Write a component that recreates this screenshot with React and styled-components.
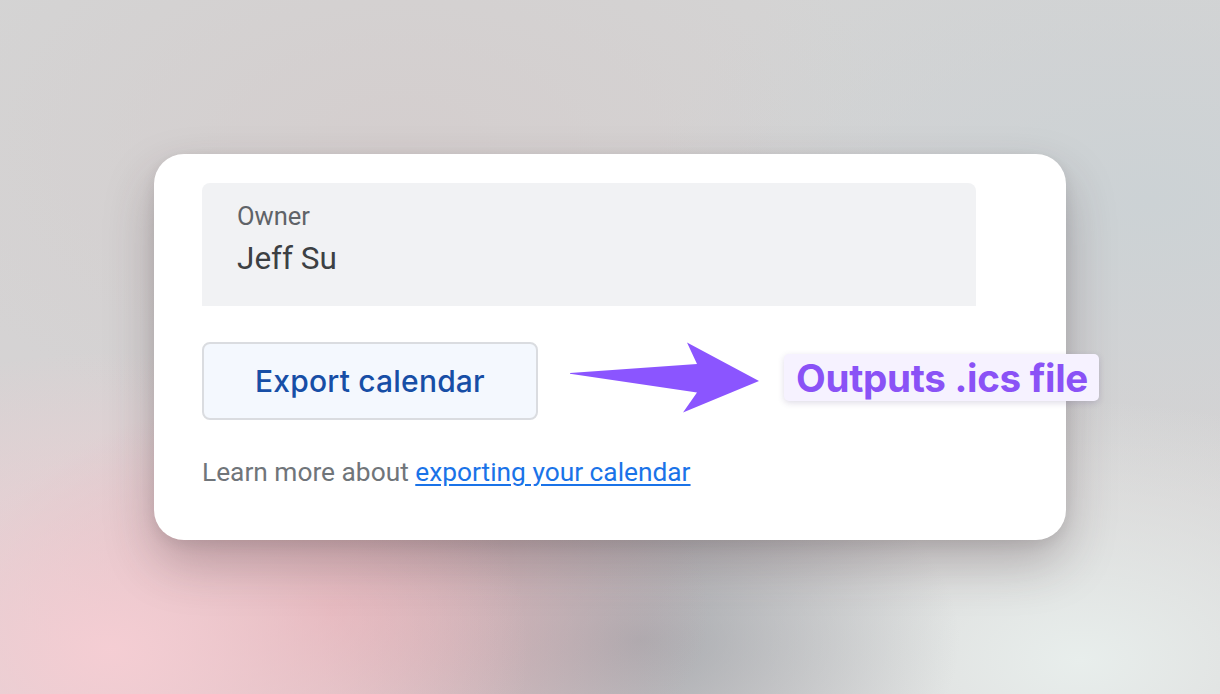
import React from "react";
import styled, { createGlobalStyle } from "styled-components";

const Global = createGlobalStyle`
  html, body { margin: 0; padding: 0; }
  body { font-family: Roboto, "Liberation Sans", sans-serif; }
  * { box-sizing: border-box; }
`;

const Stage = styled.div`
  width: 1220px;
  height: 694px;
  overflow: hidden;
  display: flex;
  align-items: center;
  justify-content: center;
  background:
    radial-gradient(ellipse 420px 300px at 110px 650px, rgba(246, 206, 212, 0.95), rgba(246, 206, 212, 0) 100%),
    radial-gradient(ellipse 380px 220px at 330px 610px, rgba(222, 160, 168, 0.75), rgba(222, 160, 168, 0) 100%),
    radial-gradient(ellipse 320px 200px at 640px 640px, rgba(150, 154, 160, 0.7), rgba(150, 154, 160, 0) 100%),
    radial-gradient(ellipse 440px 260px at 1080px 660px, rgba(232, 238, 236, 1), rgba(232, 238, 236, 0) 100%),
    radial-gradient(ellipse 500px 300px at 1150px 200px, rgba(204, 210, 213, 1), rgba(204, 210, 213, 0) 100%),
    radial-gradient(ellipse 500px 300px at 400px 150px, rgba(212, 206, 206, 1), rgba(212, 206, 206, 0) 100%),
    linear-gradient(180deg, #d4d4d4 0%, #d6d2d3 100%);
`;

const Card = styled.div`
  width: 912px;
  height: 386px;
  background: #ffffff;
  border-radius: 30px;
  padding: 29px 90px 0 48px;
  display: flex;
  flex-direction: column;
  box-shadow: 0 24px 50px rgba(60, 40, 45, 0.28), 0 4px 14px rgba(0, 0, 0, 0.08);
`;

const Field = styled.div`
  width: 774px;
  height: 123px;
  background: #f1f2f4;
  border-radius: 8px 8px 0 0;
  padding: 17px 35px 0;
  display: flex;
  flex-direction: column;
`;

const FieldLabel = styled.div`
  font-family: Roboto, "Liberation Sans", sans-serif;
  font-size: 25.5px;
  line-height: 32px;
  color: #5f6368;
`;

const FieldValue = styled.div`
  font-family: Roboto, "Liberation Sans", sans-serif;
  font-size: 31.5px;
  line-height: 40px;
  margin-top: 7px;
  color: #3c4043;
`;

const ActionRow = styled.div`
  margin-top: 36px;
  display: flex;
  align-items: center;
  height: 78px;
`;

const ExportButton = styled.button`
  flex-shrink: 0;
  width: 336px;
  height: 78px;
  border: 2px solid #dadce0;
  border-radius: 8px;
  background: #f4f8fe;
  color: #174ea6;
  font-family: Inter, "Open Sans", sans-serif;
  font-weight: 500;
  font-size: 30px;
  letter-spacing: 0.2px;
  cursor: pointer;
  padding: 0;
`;

const Arrow = styled.svg`
  flex-shrink: 0;
  margin-left: 32px;
  width: 190px;
  height: 78px;
  display: block;
`;

const Badge = styled.div`
  flex-shrink: 0;
  align-self: flex-start;
  margin-top: 12px;
  margin-left: 24px;
  height: 47px;
  padding: 0 11px 0 12px;
  display: flex;
  align-items: center;
  background: #f6f2ff;
  border-radius: 5px;
  box-shadow: 0 2px 6px rgba(80, 60, 120, 0.18);
  color: #8a52f6;
  font-family: Inter, "Liberation Sans", sans-serif;
  font-weight: 700;
  font-size: 38.6px;
  letter-spacing: -0.3px;
  white-space: nowrap;
`;

const HelpText = styled.p`
  margin: 35px 0 0;
  font-family: Roboto, "Liberation Sans", sans-serif;
  font-size: 26.3px;
  line-height: 34px;
  color: #70757a;
`;

const HelpLink = styled.a`
  color: #1a73e8;
  text-decoration: underline;
  text-underline-offset: 3px;
`;

export default function App() {
  return (
    <>
      <Global />
      <Stage>
        <Card>
          <Field>
            <FieldLabel>Owner</FieldLabel>
            <FieldValue>Jeff Su</FieldValue>
          </Field>
          <ActionRow>
            <ExportButton>Export calendar</ExportButton>
            <Arrow viewBox="0 0 190 78">
              <polygon
                points="0,31 127,22 117,0.5 189,39 113,70.5 127,50.5 0,31.8"
                fill="#8b55ff"
              />
            </Arrow>
            <Badge>Outputs .ics file</Badge>
          </ActionRow>
          <HelpText>
            Learn more about <HelpLink href="#">exporting your calendar</HelpLink>
          </HelpText>
        </Card>
      </Stage>
    </>
  );
}
